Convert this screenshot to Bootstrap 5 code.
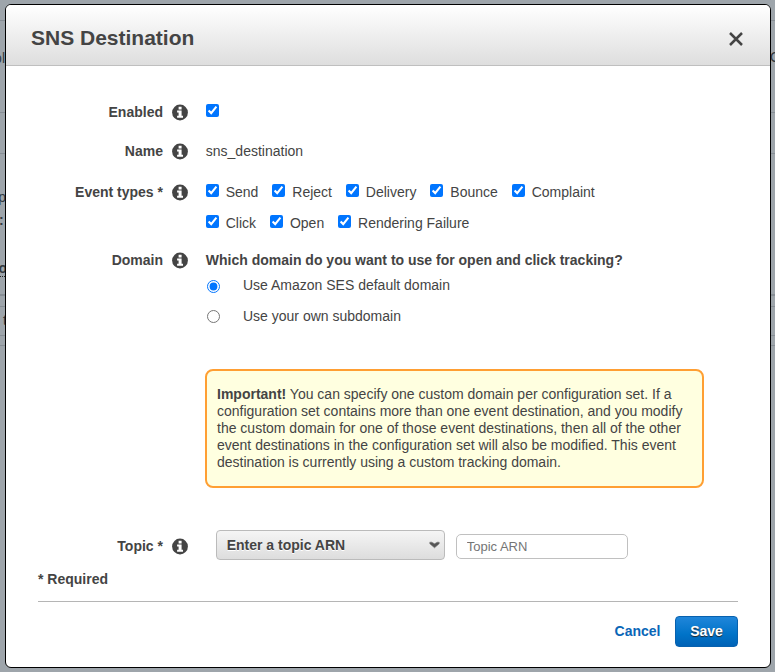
<!DOCTYPE html>
<html lang="en">
<head>
<meta charset="utf-8">
<meta name="viewport" content="width=device-width, initial-scale=1">
<title>SNS Destination</title>
<link href="https://cdn.jsdelivr.net/npm/bootstrap@5.3.0/dist/css/bootstrap.min.css" rel="stylesheet">
<style>
body{font:14px/17px "Liberation Sans",Arial,sans-serif;color:#444;background:#9ea5ab;height:672px;overflow:hidden;padding:4px 4px 4px 5px}
/* page behind the dialog */
.behind{position:absolute;inset:0;overflow:hidden;font-size:14px;color:#343a40}
.behind span{position:absolute;white-space:nowrap}
.behind i{position:absolute;left:0;right:0;height:1px;background:#878e95}
.dialog-box{height:664px;width:766px;background:#fff;border:1px solid #000;border-radius:6px;overflow:hidden;z-index:1}
.dialog-head{height:61px;padding:0 27.5px 0 25px;background:linear-gradient(#fff,#dedede);border-bottom:1px solid #bfbfbf;border-radius:0}
.dialog-head h1{font-size:21px;line-height:26px;margin-top:5px}
.close-icon{margin-top:7px}
.dialog-form{padding:38px 32px 0}
.field-label{width:150px;flex:none}
.field-label svg{width:16px;height:17px;margin-left:9px;flex:none}
input[type=checkbox],input[type=radio]{width:13px;height:13px;margin:0;flex:none}
.field-row{gap:17.8px}
.h39{height:39px}.h41{height:41px}.h68{height:68px}.h118{height:117px}
.check-row{height:31px;gap:14px}
.check-row label{gap:6.9px}
.radio-row{height:31px;gap:23.2px;padding-left:1px}
.radio-row input{margin-top:3px}
.radio-row + .radio-row input{margin-top:2px}
.notice{width:499px;height:119px;margin-left:167px;padding:15px 10px 10px;background:#ffffe0;border:2px solid #ff9f33;border-radius:8px}
.topic-row{margin-top:42px;gap:28px}
.topic-select{width:229px;height:30px;border:1px solid #bbb;border-radius:4px;background:linear-gradient(#f5f5f5,#ddd);padding:0 4px 0 9.7px;text-shadow:0 1px 0 #fff}
.topic-input{width:172px;height:25px;margin:4px 0 0 11px;border:1px solid #c0c0c0;border-radius:5px;padding:0 9.7px;font-size:13px;line-height:15px;outline:0;background:#fff}
.topic-input::placeholder{color:#757575}
.required-note{margin-top:11px}
.rule{height:1px;background:#b5b5b5;margin-top:13px}
.actions{margin-top:14px;gap:14.5px}
.cancel-link{color:#0a66b7;text-decoration:none}
.save-btn{width:63px;height:31px;padding:0;border:1px solid #0861ae;border-radius:4px;background:linear-gradient(#2086da,#0073c8 60%,#0062b6);color:#fff;font-size:14px;line-height:17px;text-shadow:0 1px 1px #222}
</style>
<script src="https://cdn.jsdelivr.net/npm/bootstrap@5.3.0/dist/js/bootstrap.bundle.min.js"></script>
</head>
<body>
<svg class="d-none"><symbol id="info" viewBox="0 0 16 16"><circle cx="8" cy="8" r="7.9" fill="#444"/><path d="M6.6 2.3h3v2.6h-3zM5.1 6h4.5v5.3H11v2H5.1v-2h1.5V7.9H5.1z" fill="#fff"/></symbol></svg>
<div class="behind" aria-hidden="true">
  <i style="top:20px"></i><i style="top:112px"></i><i style="top:153px"></i><i style="top:294px;height:2px"></i><i style="top:306px"></i><i style="top:335px"></i><i style="top:345px"></i>
  <span style="right:770px;top:50px">pl</span><span style="left:770px;top:49px">C</span>
  <span style="right:769px;top:189px">mp</span><b><span style="left:-1px;top:212px">:</span><span style="right:768px;top:260px;border-bottom:1px dotted #222;line-height:16px">o</span></b><span style="left:3px;top:312px">t</span>
</div>
<main class="dialog-box modal-content position-relative">
  <header class="dialog-head modal-header d-flex align-items-center justify-content-between">
    <h1 class="fw-bold mb-0">SNS Destination</h1>
    <svg width="14" height="14" viewBox="0 0 14 14" class="close-icon" role="img" aria-label="Close"><path d="M1 1l12 12M13 1L1 13" stroke="#444" stroke-width="2.5"/></svg>
  </header>
  <form class="dialog-form">
    <div class="field-row d-flex h39">
      <div class="field-label fw-bold d-flex justify-content-end align-items-start">Enabled<svg><use href="#info"/></svg></div>
      <input type="checkbox" checked aria-label="Enabled">
    </div>
    <div class="field-row d-flex h41">
      <div class="field-label fw-bold d-flex justify-content-end align-items-start">Name<svg><use href="#info"/></svg></div>
      <div>sns_destination</div>
    </div>
    <div class="field-row d-flex h68">
      <div class="field-label fw-bold d-flex justify-content-end align-items-start">Event types *<svg><use href="#info"/></svg></div>
      <div>
        <div class="check-row d-flex align-items-start">
          <label class="d-flex"><input type="checkbox" checked>Send</label>
          <label class="d-flex"><input type="checkbox" checked>Reject</label>
          <label class="d-flex"><input type="checkbox" checked>Delivery</label>
          <label class="d-flex"><input type="checkbox" checked>Bounce</label>
          <label class="d-flex"><input type="checkbox" checked>Complaint</label>
        </div>
        <div class="check-row d-flex align-items-start">
          <label class="d-flex"><input type="checkbox" checked>Click</label>
          <label class="d-flex"><input type="checkbox" checked>Open</label>
          <label class="d-flex"><input type="checkbox" checked>Rendering Failure</label>
        </div>
      </div>
    </div>
    <div class="field-row d-flex h118">
      <div class="field-label fw-bold d-flex justify-content-end align-items-start">Domain<svg><use href="#info"/></svg></div>
      <div>
        <div class="fw-bold mb-2">Which domain do you want to use for open and click tracking?</div>
        <label class="radio-row d-flex"><input type="radio" name="domain" checked>Use Amazon SES default domain</label>
        <label class="radio-row d-flex"><input type="radio" name="domain">Use your own subdomain</label>
      </div>
    </div>
    <div class="notice"><b>Important!</b> You can specify one custom domain per configuration set. If a configuration set contains more than one event destination, and you modify the custom domain for one of those event destinations, then all of the other event destinations in the configuration set will also be modified. This event destination is currently using a custom tracking domain.</div>
    <div class="topic-row d-flex">
      <div class="field-label fw-bold d-flex justify-content-end align-items-start pt-2">Topic *<svg><use href="#info"/></svg></div>
      <div class="d-flex align-items-start">
        <div class="topic-select fw-bold d-flex align-items-center justify-content-between" role="button">Enter a topic ARN<svg width="11" height="8" viewBox="0 0 11 8"><path d="M.8 1.2h2l2.7 1.6 2.7-1.6h2v1.6L5.5 6.8.8 2.8z" fill="#555" stroke="#777" stroke-width=".6"/></svg></div>
        <input class="topic-input" type="text" placeholder="Topic ARN">
      </div>
    </div>
    <div class="fw-bold required-note">* Required</div>
    <div class="rule"></div>
    <div class="d-flex justify-content-end align-items-center actions">
      <a class="cancel-link fw-bold" href="#">Cancel</a>
      <button type="button" class="save-btn btn fw-bold">Save</button>
    </div>
  </form>
</main>
</body>
</html>
